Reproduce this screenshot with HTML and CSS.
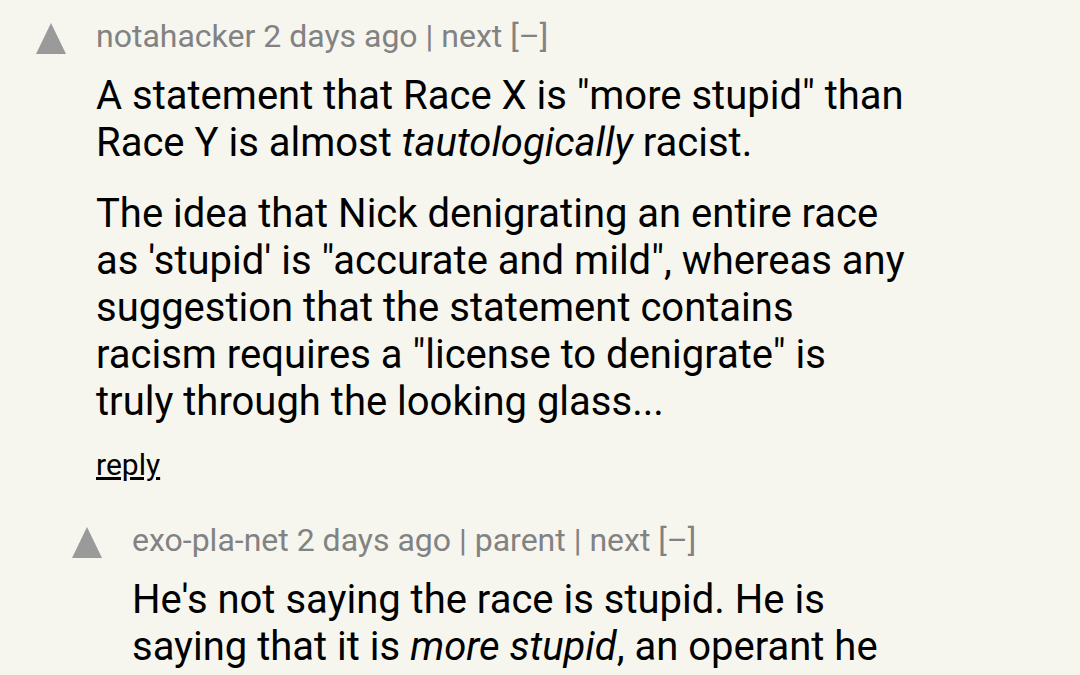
FILE: index.html
```html
<!DOCTYPE html>
<html>
<head>
<meta charset="utf-8">
<link rel="stylesheet" href="styles.css">
</head>
<body>
<div class="thread">
  <div class="comment">
    <div class="vote"><span class="arrow"></span></div>
    <div class="content">
      <div class="meta">notahacker 2 days ago | next [–]</div>
      <div class="text">
        <p>A statement that Race X is "more stupid" than Race Y is almost <i>tautologically</i> racist.</p>
        <p>The idea that Nick denigrating an entire race as 'stupid' is "accurate and mild", whereas any suggestion that the statement contains racism requires a "license to denigrate" is truly through the looking glass...</p>
      </div>
      <div class="reply"><a href="#">reply</a></div>
    </div>
  </div>
  <div class="comment nested">
    <div class="vote"><span class="arrow"></span></div>
    <div class="content">
      <div class="meta">exo-pla-net 2 days ago | parent | next [–]</div>
      <div class="text">
        <p>He's not saying the race is stupid. He is saying that it is <i>more stupid</i>, an operant he uses as a shorthand.</p>
      </div>
    </div>
  </div>
</div>
</body>
</html>
```

FILE: styles.css
```css
html, body {
  margin: 0;
  padding: 0;
  background: #f6f6ef;
}
body {
  font-family: Roboto, "Noto Sans", sans-serif;
  color: #000;
  overflow: hidden;
}
.thread {
  padding: 18px 171px 0 36px;
}
.comment {
  display: flex;
}
.comment.nested {
  padding-left: 36px;
  margin-top: 40px;
}
.vote {
  flex: 0 0 60px;
}
.arrow {
  display: block;
  width: 0;
  height: 0;
  margin-top: 5px;
  border-left: 15px solid transparent;
  border-right: 15px solid transparent;
  border-bottom: 31px solid #9a9a9a;
}
.content {
  flex: 1;
  min-width: 0;
}
.meta {
  font-size: 32px;
  line-height: 36px;
  color: #828282;
}
.text {
  font-size: 40px;
  line-height: 47px;
  margin-top: 18px;
}
.text p {
  margin: 0 0 24px 0;
}
.text p:last-child {
  margin-bottom: 0;
}
.reply {
  font-size: 30px;
  line-height: 34px;
  margin-top: 23px;
}
.reply a {
  color: #000;
  text-decoration: underline;
}
```
